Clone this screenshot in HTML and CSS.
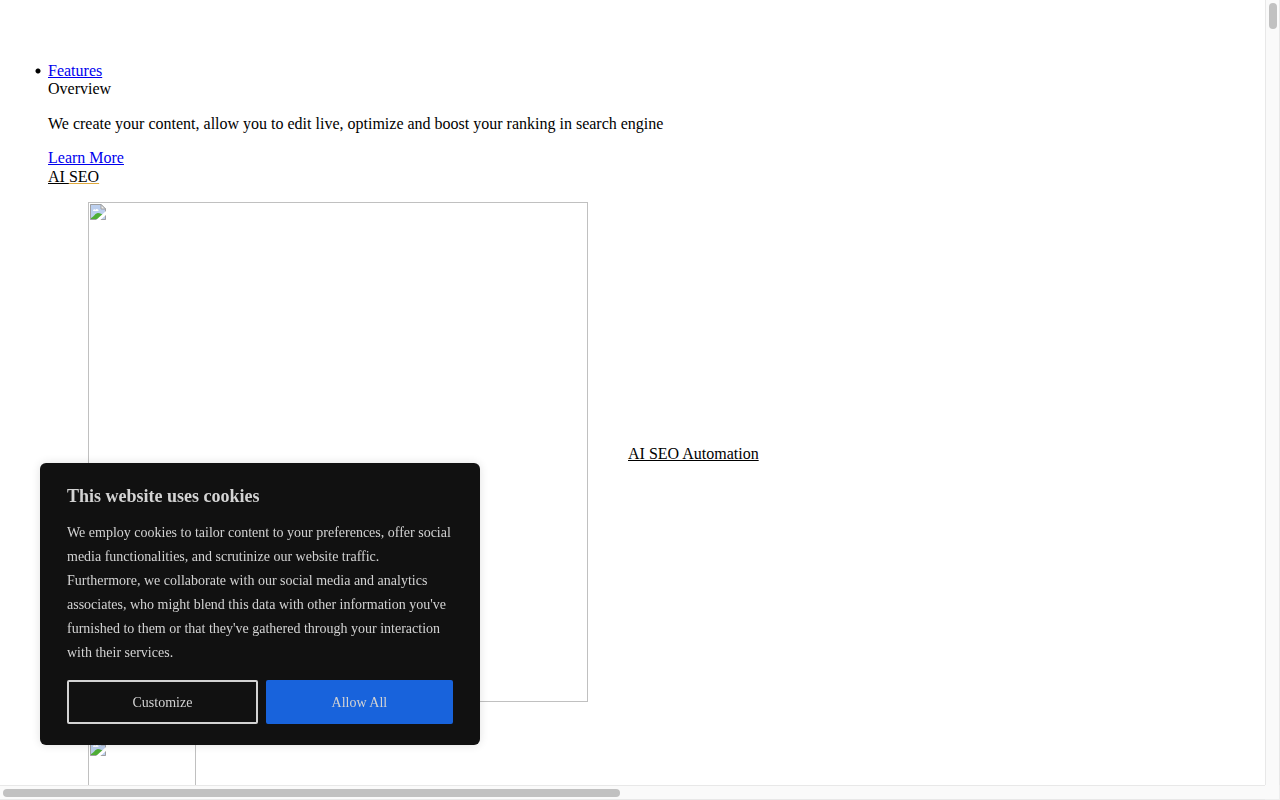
FILE: index.html
```html
<!DOCTYPE html>
<html lang="en">
<head>
<meta charset="utf-8">
<title>AI SEO</title>
<link rel="stylesheet" href="styles.css">
</head>
<body>
<svg class="defs" aria-hidden="true">
  <symbol id="broken" viewBox="0 0 16 16">
    <path fill="#bccfee" d="M0 0h11l5 5v11H0z"/>
    <path fill="#fff" d="M3 7c0-2 2-2 2.500-1C6 4 9 5 8.500 7z"/>
    <path fill="#4fae36" d="M1 15v-1c3-1 4-5 7-5 2 0 4 1 5 2l-4 4z"/>
    <path fill="none" stroke="#a0a0a0" d="M.5 15.500V.5h10.500l4.500 4.500v10.500z"/>
    <path fill="#eee" stroke="#a0a0a0" d="M11 .5V5h4.500z"/>
    <path stroke="#fff" stroke-width="3" d="M7 17L17 8"/>
  </symbol>
</svg>
<div class="window">
  <main class="page">
    <ul class="menu">
      <li class="item">
        <a href="#features">Features</a>
        <div>Overview</div>
        <p class="intro">We create your content, allow you to edit live, optimize and boost your ranking in search engine</p>
        <a href="#more">Learn More</a>
        <div class="group"><a class="plain pair" href="#seo"><span class="lead">AI </span><span class="accent">SEO</span></a></div>
        <a class="plain feature" href="#automation">
          <span class="frame large"><svg class="broken"><use href="#broken"/></svg></span>
          <span class="label">AI SEO Automation</span>
        </a>
        <a class="plain feature" href="#next" aria-label="Next feature">
          <span class="frame small"><svg class="broken"><use href="#broken"/></svg></span>
        </a>
      </li>
    </ul>
  </main>
  <div class="track vertical"><div class="thumb"></div></div>
  <div class="track horizontal"><div class="thumb"></div></div>
  <div class="corner"></div>
</div>
<section class="cookies" aria-labelledby="cookie-title">
  <h2 class="title" id="cookie-title">This website uses cookies</h2>
  <p class="text">We employ cookies to tailor content to your preferences, offer social media functionalities, and scrutinize our website traffic. Furthermore, we collaborate with our social media and analytics associates, who might blend this data with other information you've furnished to them or that they've gathered through your interaction with their services.</p>
  <div class="actions">
    <button class="button outline" type="button">Customize</button>
    <button class="button solid" type="button">Allow All</button>
  </div>
</section>
</body>
</html>
```
FILE: styles.css
```css
* { box-sizing: border-box; }
body {
  margin: 0;
  overflow: hidden;
  background: #fff;
  color: #000;
  font: 16px/18px "Liberation Serif", "Times New Roman", serif;
}
a { color: #0000ee; }
.defs { display: none; }
.window {
  display: grid;
  grid-template-columns: minmax(0, 1fr) 15px;
  grid-template-rows: minmax(0, 1fr) 15px;
  height: 100vh;
}
.page { overflow: hidden; padding: 62px 8px 0 34px; }
.menu { margin: 0; padding: 0; list-style: none; }
.item {
  padding-left: 14px;
  background: radial-gradient(circle at 4px 9px, #000 2px, transparent 3px) no-repeat;
}
.intro { margin: 17px 0 16px; }
.plain { color: #000; }
.group { margin-top: 1px; }
.pair { text-decoration: none; }
.lead { text-decoration: underline; }
.accent { text-decoration: underline #e0a93c; text-decoration-skip-ink: none; }
.feature {
  display: flex;
  align-items: center;
  gap: 40px;
  margin: 16px 40px 36px;
}
.frame {
  flex: none;
  padding: 1px;
  border: 1px solid #c0c0c0;
}
.large { width: 500px; height: 500px; }
.small { width: 108px; height: 108px; }
.broken { display: block; width: 16px; height: 16px; }
.label { padding-top: 3px; }
.track { background: #fafafa; }
.thumb { border-radius: 4px; background: #c1c1c1; }
.vertical {
  padding: 3px 2px 3px 3px;
  border: solid #e8e8e8;
  border-width: 0 1px;
}
.vertical .thumb { height: 26px; }
.horizontal {
  padding: 3px 3px 2px;
  border: solid #e8e8e8;
  border-width: 1px 0;
}
.horizontal .thumb { width: 49%; height: 8px; }
.corner {
  border: solid #eee;
  border-width: 0 1px 1px 0;
  background: #fafafa;
}
.cookies {
  position: fixed;
  left: 40px;
  bottom: 55px;
  width: 440px;
  padding: 22px 27px 21px;
  border-radius: 6px;
  background: #111;
  box-shadow: 0 0 10px rgba(0, 0, 0, 0.12);
  color: #d3d3d3;
}
.title { margin: 0 0 14px; font-size: 18px; line-height: 22px; }
.text { margin: 0 0 15px; font-size: 14px; line-height: 24px; }
.actions { display: flex; gap: 8px; }
.button {
  height: 44px;
  padding: 2px 6px 0;
  border: 2px solid #d3d3d3;
  border-radius: 2px;
  background: #111;
  color: #d3d3d3;
  font: inherit;
  font-size: 14px;
}
.outline { flex: 191; }
.solid {
  flex: 187;
  border-color: #1863dc;
  background: #1863dc;
}
```
